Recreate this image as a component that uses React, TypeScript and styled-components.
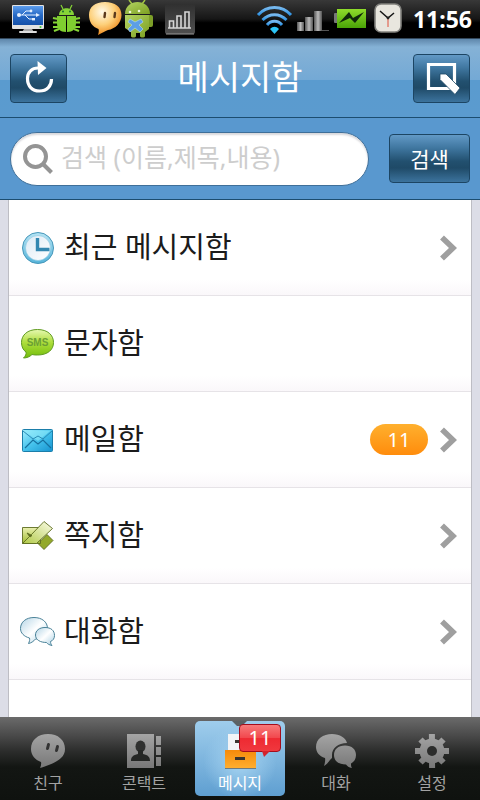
import React from "react";
import styled, { createGlobalStyle, css } from "styled-components";

const GlobalStyle = createGlobalStyle`
  *, *::before, *::after { box-sizing: border-box; }
  body {
    margin: 0;
    background: #dcdde7;
    font-family: "Noto Sans", "Noto Sans CJK KR", sans-serif;
  }
  button, input { font: inherit; }
`;

const Screen = styled.div`
  display: flex;
  flex-direction: column;
  min-height: 100vh;
`;

const StatusBar = styled.div`
  display: flex;
  align-items: center;
  justify-content: space-between;
  height: 38px;
  padding: 0 8px;
  background: linear-gradient(#383838, #161616 50%, #000 60%, #000);
  color: #fff;
`;

const StatusGroup = styled.div`
  display: flex;
  align-items: center;
  svg { display: block; }
`;

const Time = styled.time`
  padding-left: 6px;
  font-size: 23px;
  line-height: 38px;
  font-weight: 700;
`;

const Header = styled.header`
  display: flex;
  align-items: center;
  justify-content: space-between;
  height: 80px;
  padding: 0 10px;
  border-top: 1px solid #33485c;
  border-bottom: 1px solid #1c4d70;
  background: linear-gradient(#5f87ab, #85b2d6 8px, #74a9d5 41px, #5a9bcf 41px, #5b9bcf);
`;

const Title = styled.h1`
  margin: 0;
  padding-bottom: 2px;
  font-size: 34px;
  line-height: 44px;
  font-weight: 400;
  color: #fff;
`;

const GlossButton = styled.button<{ $wide?: boolean }>`
  display: flex;
  align-items: center;
  justify-content: center;
  flex: none;
  width: ${(p) => (p.$wide ? 81 : 57)}px;
  height: 49px;
  padding: 0;
  border: 1px solid #1c4563;
  border-radius: 4px;
  background: linear-gradient(#6299c6, #3f769f 28%, #22506f 56%, #1f4a67 70%, #3c739d);
  color: #fff;
  font-size: 21px;
  line-height: 28px;
`;

const SearchForm = styled.form`
  display: flex;
  align-items: center;
  gap: 20px;
  height: 82px;
  padding: 0 10px;
  border-bottom: 1px solid #1c4d70;
  background: #5998cf;
`;

const SearchField = styled.label`
  display: flex;
  align-items: center;
  gap: 8px;
  flex: 1;
  min-width: 0;
  height: 54px;
  padding: 0 24px 0 12px;
  border: 1px solid #3f6f99;
  border-radius: 27px;
  background: #fff;
  box-shadow: inset 0 2px 2px #d8d8dc;
  svg { flex: none; }
`;

const SearchInput = styled.input`
  flex: 1;
  min-width: 0;
  padding: 0 0 4px;
  border: 0;
  outline: 0;
  background: transparent;
  color: #222;
  font-size: 25px;
  line-height: 32px;
  &::placeholder { color: #cdcdcd; opacity: 1; }
`;

const Content = styled.main`
  flex: 1;
  display: flex;
  padding: 0 8px;
  background: #dcdde7;
`;

const List = styled.ul`
  flex: 1;
  margin: 0;
  padding: 0;
  list-style: none;
  background: #fff;
  border: solid #bdbdc4;
  border-width: 0 1px;
`;

const Row = styled.a`
  display: flex;
  align-items: center;
  gap: 8px;
  height: 96px;
  padding: 0 14px 0 11px;
  border-bottom: 1px solid #e6e3e7;
  background: linear-gradient(#fff 80px, #faf7fa);
  color: #1b1b1b;
  text-decoration: none;
  svg { flex: none; }
`;

const RowLabel = styled.span`
  flex: 1;
  padding-bottom: 2px;
  font-size: 29px;
  line-height: 40px;
`;

const Count = styled.span`
  width: 58px;
  margin-right: 4px;
  border-radius: 16px;
  background: linear-gradient(#ffb02e, #ff8c0c);
  color: #fff;
  font-size: 20px;
  line-height: 31px;
  text-align: center;
`;

const TabBar = styled.nav`
  position: sticky;
  bottom: 0;
  display: grid;
  grid-template-columns: repeat(5, 1fr);
  height: 83px;
  padding: 4px 0;
  background: linear-gradient(#6b6b6b, #474747 20px, #2c2d2c 34px, #131613 50px, #0f120f);
`;

const Tab = styled.a<{ $active?: boolean }>`
  position: relative;
  display: flex;
  flex-direction: column;
  align-items: center;
  height: 75px;
  margin: 0 3px;
  border-radius: 5px;
  color: #a3a3a3;
  font-size: 16px;
  line-height: 24px;
  text-decoration: none;
  svg { display: block; }
  ${(p) =>
    p.$active &&
    css`
      color: #fff;
      background: radial-gradient(circle at 50% 55%, #a5d3f1, transparent 60%),
        linear-gradient(#9fcdec, #5f9fd1);
    `}
`;

const TabBadge = styled.span`
  position: absolute;
  top: 3px;
  right: 4px;
  width: 42px;
  height: 28px;
  border: 1px solid #a30d1c;
  border-radius: 4px;
  background: linear-gradient(#f77a7a, #f2474c 50%, #ee2a32 52%, #f0383e);
  color: #fff;
  font-size: 20px;
  line-height: 26px;
  text-align: center;
  &::after {
    content: "";
    position: absolute;
    top: 100%;
    left: 22px;
    border: solid transparent;
    border-width: 6px 6px 0 2px;
    border-top-color: #d3222c;
  }
`;

const MonitorIcon = () => (
  <svg width="40" height="38" viewBox="8 0 40 38" aria-hidden="true">
    <defs>
      <linearGradient id="screen" x2="0" y2="1"><stop stopColor="#5c9cec" /><stop offset=".5" stopColor="#2568c4" /><stop offset="1" stopColor="#1550a8" /></linearGradient>
    </defs>
    <path d="M24 29h8l2 3h-12z" fill="#aaa" />
    <rect x="19" y="31" width="18" height="2" rx="1" fill="#ddd" />
    <rect x="12" y="5" width="32" height="24" rx="1" fill="#e2e2e2" />
    <rect x="13" y="6" width="30" height="19" fill="url(#screen)" />
    <path d="M19 15h18M22 15l4-4h5M25 15l4 4h5" fill="none" stroke="#e4f0ff" strokeWidth="1" />
    <circle cx="19" cy="15" r="2" fill="#e4f0ff" /><path d="M36 13l4 2-4 2z" fill="#e4f0ff" />
    <circle cx="31" cy="11" r="1.400" fill="#e4f0ff" /><rect x="32" y="18" width="3" height="2.400" fill="#e4f0ff" />
    <circle cx="40.500" cy="27" r="1" fill="#4c3" />
  </svg>
);

const BugIcon = () => (
  <svg width="38" height="38" viewBox="48 0 38 38" aria-hidden="true">
    <path d="M61 5l2 4M72 5l-2 4" stroke="#86d437" strokeWidth="1.200" />
    <path d="M53 18l5 1M53 22.500h5M53 27h5M54 31l5-2M80 18l-5 1M80 22.500h-5M80 27h-5M79 31l-5-2" stroke="#86d437" strokeWidth="2.200" fill="none" />
    <path d="M59 15c0-9 15-9 15 0z" fill="#86d437" />
    <path d="M57 16h9v16c-6 0-9-3-9-9zM67 16h9v7c0 6-3 9-9 9z" fill="#7fcf30" />
    <circle cx="63" cy="11.500" r=".9" fill="#163" /><circle cx="70" cy="11.500" r=".9" fill="#163" />
  </svg>
);

const TalkIcon = () => (
  <svg width="38" height="38" viewBox="86 0 38 38" aria-hidden="true">
    <defs><radialGradient id="talk" cx=".4" cy=".3" r=".7"><stop stopColor="#fffaea" /><stop offset=".55" stopColor="#fdd07a" /><stop offset="1" stopColor="#ee8a1d" /></radialGradient></defs>
    <path d="M105 2c10 0 16.500 5 16.500 13S115 29 108 30c-3 1-6 3-10 5 1-3 1-5 .500-6-6-2-9.500-7-9.500-14 0-8 6-13 16-13z" fill="url(#talk)" />
    <path d="M105 13l-.500 4M115 13l-.500 4" stroke="#5b3a1c" strokeWidth="2.400" strokeLinecap="round" />
  </svg>
);

const AndroidIcon = () => (
  <svg width="34" height="38" viewBox="124 0 34 38" aria-hidden="true">
    <defs><linearGradient id="droid" x2="1" y2="1"><stop stopColor="#b4d463" /><stop offset="1" stopColor="#7c9f22" /></linearGradient></defs>
    <path d="M129 0l3 4M145 0l-3 4" stroke="#a2c644" strokeWidth="1.500" />
    <path d="M125 14c0-16 25-16 25 0z" fill="url(#droid)" />
    <rect x="146" y="15" width="7" height="12" rx="2" fill="#7d9f28" />
    <path d="M125 15h24v14l-4 3v4c0 2-5 2-5 0v-3h-4v3c0 2-5 2-5 0v-4l-6-4z" fill="url(#droid)" />
    <circle cx="130" cy="12" r="1.300" fill="#eef5d8" /><circle cx="139" cy="11" r="1.300" fill="#eef5d8" />
    <path d="M130 19l5 3 6-3 2 3-4 3 4 4-3 3-5-4-5 4-2-3 4-4-4-3z" fill="#5c9fe6" stroke="#b7d9fa" strokeWidth=".6" />
  </svg>
);

const ChartIcon = () => (
  <svg width="40" height="38" viewBox="158 0 40 38" aria-hidden="true">
    <defs><linearGradient id="chart" x2="0" y2="1"><stop stopColor="#303030" /><stop offset="1" stopColor="#505050" /></linearGradient></defs>
    <rect x="165" y="4" width="30" height="30" rx="2" fill="url(#chart)" />
    <path d="M166 34h28" stroke="#999" />
    <path d="M168 28h23M169.500 28v-7h4v7M177 28v-12h4v12M185 28v-16h4v16" fill="none" stroke="#d5d5d5" strokeWidth="1.600" />
  </svg>
);

const WifiIcon = () => (
  <svg width="42" height="38" viewBox="252 0 42 38" aria-hidden="true">
    <defs><linearGradient id="wifi" x2="0" y2="1"><stop stopColor="#76b8ee" /><stop offset="1" stopColor="#2f93e4" /></linearGradient></defs>
    <g fill="none" stroke="url(#wifi)" strokeWidth="3">
      <path d="M257 15c9-10 24-10 33 0" /><path d="M261.500 20c7-7 17-7 24 0" /><path d="M266 25c4-5 11-5 15 0" />
    </g>
    <path d="M269 29c3-3 6-3 9 0l-4.500 5z" fill="#2cc4f6" />
  </svg>
);

const SignalIcon = () => (
  <svg width="36" height="38" viewBox="294 0 36 38" aria-hidden="true">
    <defs><linearGradient id="signal"><stop stopColor="#555" /><stop offset=".5" stopColor="#bbb" /><stop offset="1" stopColor="#555" /></linearGradient></defs>
    <rect x="296" y="22" width="7" height="9" fill="url(#signal)" />
    <rect x="304" y="17" width="8" height="14" fill="url(#signal)" />
    <rect x="313" y="11" width="8" height="20" fill="url(#signal)" />
    <rect x="321" y="30" width="7" height="1" fill="#555" />
  </svg>
);

const BatteryIcon = () => (
  <svg width="40" height="38" viewBox="330 0 40 38" aria-hidden="true">
    <defs><linearGradient id="battery" x2="0" y2="1"><stop stopColor="#8fdc2c" /><stop offset="1" stopColor="#4aa307" /></linearGradient></defs>
    <rect x="333" y="13" width="4" height="10" rx="1" fill="#777" />
    <rect x="336" y="9" width="29" height="19" fill="url(#battery)" />
    <path d="M338 23l10-11 4 6 11-6-9 11-5-5z" fill="#10280a" />
  </svg>
);

const ClockStatusIcon = () => (
  <svg width="36" height="38" viewBox="370 0 36 38" aria-hidden="true">
    <rect x="374" y="4" width="26" height="28" rx="6" fill="#e8e6de" stroke="#82827e" strokeWidth="1.600" />
    <path d="M379 11l8 7 6-5" fill="none" stroke="#151515" strokeWidth="1.500" />
    <path d="M387 18v9" stroke="#e0503c" /><circle cx="387" cy="18" r="1.400" fill="#222" />
  </svg>
);

const RefreshIcon = () => (
  <svg width="30" height="34" viewBox="23 61 30 34" aria-hidden="true">
    <path d="M37 68c-6 0-10.500 4-10.500 10.500C26.500 86 31 91 38.500 91 46 91 50.500 86 50.500 79" fill="none" stroke="#fff" strokeWidth="3.200" />
    <path d="M36.500 61l9 7-8.500 7z" fill="#fff" />
  </svg>
);

const ComposeIcon = () => (
  <svg width="36" height="36" viewBox="424 61 36 36" aria-hidden="true">
    <path d="M451 89.500H428.500V65.500H454.500V88" fill="none" stroke="#fff" strokeWidth="3.200" />
    <path d="M440 75h6l14 14-5 6.500-15-15z" fill="#fff" stroke="#1f4a67" strokeWidth=".8" />
  </svg>
);

const SearchIcon = () => (
  <svg width="30" height="30" viewBox="0 0 30 30" aria-hidden="true">
    <circle cx="12.500" cy="12.500" r="10.500" fill="none" stroke="#949494" strokeWidth="4" />
    <path d="M20.500 20.500l8 8" stroke="#949494" strokeWidth="4" />
  </svg>
);

const Chevron = () => (
  <svg width="17" height="26" viewBox="0 0 17 26" aria-hidden="true">
    <path d="M2 2.500l11 10.500L2 23.500" fill="none" stroke="#9f9f9f" strokeWidth="5.600" />
  </svg>
);

const ClockIcon = () => (
  <svg width="36" height="36" viewBox="20 230 36 36" aria-hidden="true">
    <defs>
      <linearGradient id="rim" x2="0" y2="1"><stop stopColor="#b5e4f4" /><stop offset="1" stopColor="#55b4da" /></linearGradient>
      <linearGradient id="dial" x2="1" y2="1"><stop stopColor="#dceaf5" /><stop offset="1" stopColor="#fff" /></linearGradient>
    </defs>
    <circle cx="38" cy="248" r="15.500" fill="url(#rim)" stroke="#4797ba" />
    <circle cx="38" cy="248" r="12.500" fill="url(#dial)" stroke="#8cc8e0" strokeWidth=".6" />
    <path d="M37.500 238v11.500h12" fill="none" stroke="#3387b0" strokeWidth="3.400" />
  </svg>
);

const SmsIcon = () => (
  <svg width="36" height="36" viewBox="20 326 36 36" aria-hidden="true">
    <defs><linearGradient id="sms" x2="0" y2="1"><stop stopColor="#e6f8b2" /><stop offset=".45" stopColor="#aede3c" /><stop offset="1" stopColor="#72bd0a" /></linearGradient></defs>
    <path d="M37.500 329.500c10 0 16 5.500 16 13s-6 12.500-16 12.500c-2 0-4 0-5.500-.5-2 2-5 3.500-8.500 3.500 2-2 3-4 2.500-6-3-2-4.500-5.500-4.500-9.500 0-7.500 6-13 16-13z" fill="url(#sms)" stroke="#609b20" />
    <text x="37.500" y="346" textAnchor="middle" fontSize="10" fontWeight="700" fontFamily="Liberation Sans, sans-serif" fill="#6b9f35">SMS</text>
  </svg>
);

const MailIcon = () => (
  <svg width="36" height="36" viewBox="20 421 36 36" aria-hidden="true">
    <defs><linearGradient id="mail" x2="1" y2="1"><stop stopColor="#a4f0ff" /><stop offset=".5" stopColor="#45c2ec" /><stop offset="1" stopColor="#1693d0" /></linearGradient></defs>
    <rect x="22.500" y="428.500" width="30" height="22" rx="1" fill="url(#mail)" stroke="#1b7eaa" />
    <path d="M24 429.500h27L38 440z" fill="#8eeafa" opacity=".6" />
    <path d="M25 447l8-8 5 4 5-4 8 8" fill="none" stroke="#16719f" strokeWidth="1.200" />
    <path d="M23 430l10 8 5-3 5 3 9-8" fill="none" stroke="#2a8bb5" strokeWidth="1" />
  </svg>
);

const NoteIcon = () => (
  <svg width="36" height="36" viewBox="20 518 36 36" aria-hidden="true">
    <defs>
      <linearGradient id="noteA" x2="0" y2="1"><stop stopColor="#eaf0b0" /><stop offset="1" stopColor="#9fba2e" /></linearGradient>
      <linearGradient id="noteB" x1="1" x2="0" y2="1"><stop stopColor="#fbfce8" /><stop offset="1" stopColor="#b0c945" /></linearGradient>
    </defs>
    <g stroke="#5e6c20" strokeWidth=".9">
      <path d="M44 549.500l-6-6 9-9 6 6z" fill="#93a92a" />
      <path d="M22.500 527.500h18v16h-18z" fill="url(#noteA)" />
      <path d="M44 521.500l8.500 7-16 15h-14l9-9z" fill="url(#noteB)" />
      <path d="M27 533l5 2.500-2 1.500z" fill="#5e6c20" />
    </g>
  </svg>
);

const ChatIcon = () => (
  <svg width="36" height="36" viewBox="20 613 36 36" aria-hidden="true">
    <defs><linearGradient id="chat" x2="1" y2="1"><stop stopColor="#b4d5e6" /><stop offset=".5" stopColor="#fff" /><stop offset="1" stopColor="#a6cfe3" /></linearGradient></defs>
    <g stroke="#4a8298" fill="url(#chat)">
      <path d="M34 616.500c8 0 13.500 4.500 13.500 11s-5 10.500-12 10.500c-2 2.500-4.500 4-7 4.500 1-2 1.500-4 1-5.500-5.500-1.500-9-5-9-9.500 0-6.500 5.500-11 13.500-11z" />
      <path d="M45 626.500c6 0 9.500 3 9.500 8 0 3-1.500 5-4 6 0 1.500.5 3 1.500 4-2.500-.5-4.500-1.500-5.500-3-6 0-11-2.500-11-7.500 0-4.500 4-7.500 9.500-7.500z" />
    </g>
  </svg>
);

const TabDefs = () => (
  <defs>
    <linearGradient id="tabGrey" x1="0" x2="0" y1="733" y2="769" gradientUnits="userSpaceOnUse">
      <stop stopColor="#a6a6a6" /><stop offset="1" stopColor="#767676" />
    </linearGradient>
  </defs>
);

const FriendTabIcon = () => (
  <svg width="90" height="50" viewBox="3 721 90 50" aria-hidden="true">
    <TabDefs />
    <path d="M48 734c10 0 17 6 17 15 0 11-13 15-25 19 1-2 1.500-4 1-6-6-2-10-7-10-13 0-9 7-15 17-15z" fill="url(#tabGrey)" />
    <path d="M48.500 744.500l-1 4M57.500 746.500l-1 4" stroke="#333" strokeWidth="3" strokeLinecap="round" />
  </svg>
);

const ContactTabIcon = () => (
  <svg width="90" height="50" viewBox="99 721 90 50" aria-hidden="true">
    <path d="M127 734h27v34h-27zM156 736h5v9h-5zM156 747h5v8h-5zM156 757h5v9h-5z" fill="url(#tabGrey)" />
    <ellipse cx="140.500" cy="746.500" rx="5" ry="6" fill="#303130" />
    <path d="M138 750h5v4c5 1 7 3 7 7h-19c0-4 2-6 7-7z" fill="#252725" />
  </svg>
);

const MessageTabIcon = () => (
  <svg width="90" height="50" viewBox="195 721 90 50" aria-hidden="true">
    <defs><linearGradient id="drawer" x2="0" y2="1"><stop stopColor="#f58a0a" /><stop offset="1" stopColor="#ffae30" /></linearGradient></defs>
    <path d="M232 721h15l-5 5h-5z" fill="#5b6164" />
    <path d="M228 734h25v17h-25z" fill="#f2f4f6" />
    <path d="M225 750h31v18h-31z" fill="url(#drawer)" />
    <path d="M225 768.500h31" stroke="#6d7a80" />
    <path d="M235 741.500h10M235 758.500h10" stroke="#3a3530" strokeWidth="3" />
  </svg>
);

const ChatTabIcon = () => (
  <svg width="90" height="50" viewBox="291 721 90 50" aria-hidden="true">
    <path d="M332 734c8 0 14 4 15 9-9 0-15 5-15 12v3c-2 1-3 5-8 8 1-3 1.500-6 1-8-6-2-9-6-9-11 0-8 7-13 16-13z" fill="url(#tabGrey)" />
    <path d="M345 745.500c7 0 11 4 11 9.500 0 4-2 7-5 8.500 0 2 0 3 1 4.500-3-.5-5-2-6-3.500-8 0-12-4-12-9.500s4-9.500 11-9.500z" fill="url(#tabGrey)" />
  </svg>
);

const SettingsTabIcon = () => (
  <svg width="90" height="50" viewBox="387 721 90 50" aria-hidden="true">
    <g stroke="url(#tabGrey)" strokeWidth="6">
      <path d="M431.900 734L432.100 768M415 750.900L449 751.100M420.500 739.500l23 23M443.500 739.500l-23 23" />
    </g>
    <circle cx="432" cy="751" r="12.500" fill="url(#tabGrey)" />
    <circle cx="432" cy="751" r="5" fill="#2c2d2c" />
  </svg>
);

const mailboxes = [
  { label: "최근 메시지함", Icon: ClockIcon, chevron: true },
  { label: "문자함", Icon: SmsIcon, chevron: false },
  { label: "메일함", Icon: MailIcon, chevron: true, count: 11 },
  { label: "쪽지함", Icon: NoteIcon, chevron: true },
  { label: "대화함", Icon: ChatIcon, chevron: true },
];

const tabs = [
  { label: "친구", Icon: FriendTabIcon },
  { label: "콘택트", Icon: ContactTabIcon },
  { label: "메시지", Icon: MessageTabIcon, active: true, count: 11 },
  { label: "대화", Icon: ChatTabIcon },
  { label: "설정", Icon: SettingsTabIcon },
];

export default function App() {
  return (
    <Screen>
      <GlobalStyle />
      <StatusBar>
        <StatusGroup>
          <MonitorIcon />
          <BugIcon />
          <TalkIcon />
          <AndroidIcon />
          <ChartIcon />
        </StatusGroup>
        <StatusGroup>
          <WifiIcon />
          <SignalIcon />
          <BatteryIcon />
          <ClockStatusIcon />
          <Time>11:56</Time>
        </StatusGroup>
      </StatusBar>
      <Header>
        <GlossButton type="button" aria-label="새로고침"><RefreshIcon /></GlossButton>
        <Title>메시지함</Title>
        <GlossButton type="button" aria-label="작성"><ComposeIcon /></GlossButton>
      </Header>
      <SearchForm onSubmit={(e) => e.preventDefault()}>
        <SearchField>
          <SearchIcon />
          <SearchInput type="text" aria-label="검색" placeholder="검색 (이름,제목,내용)" />
        </SearchField>
        <GlossButton type="submit" $wide>검색</GlossButton>
      </SearchForm>
      <Content>
        <List>
          {mailboxes.map(({ label, Icon, chevron, count }) => (
            <li key={label}>
              <Row href="#">
                <Icon />
                <RowLabel>{label}</RowLabel>
                {count && <Count>{count}</Count>}
                {chevron && <Chevron />}
              </Row>
            </li>
          ))}
        </List>
      </Content>
      <TabBar>
        {tabs.map(({ label, Icon, active, count }) => (
          <Tab key={label} href="#" $active={active} aria-current={active ? "page" : undefined}>
            <Icon />
            {label}
            {count && <TabBadge>{count}</TabBadge>}
          </Tab>
        ))}
      </TabBar>
    </Screen>
  );
}
